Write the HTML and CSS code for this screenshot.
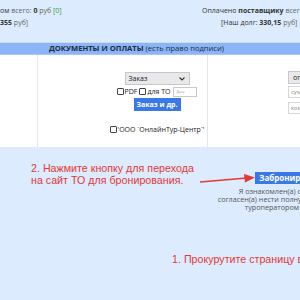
FILE: index.html
```html
<!DOCTYPE html>
<html lang="ru">
<head>
<meta charset="utf-8">
<link rel="stylesheet" href="styles.css">
</head>
<body>
<div class="page">
  <div class="summary">
    <div class="sum-left">
      <div class="line">ом <span class="muted">всего:</span> <b>0</b> <span class="muted">руб</span> <span class="green">[0]</span></div>
      <div class="line"><b>355</b> <span class="muted">руб]</span></div>
    </div>
    <div class="sum-right">
      <div class="line">Оплачено <b>поставщику</b> <span class="muted">всего: 0 руб</span></div>
      <div class="line line2">[Наш долг: <b>330,15</b> <span class="muted">руб]</span></div>
    </div>
  </div>
  <div class="header"><b>ДОКУМЕНТЫ И ОПЛАТЫ</b> (есть право подписи)</div>
  <div class="panel">
    <div class="cell cell-a"></div>
    <div class="cell cell-b">
      <div class="stack">
        <div class="select sel-main"><span>Заказ</span><svg width="6" height="4" viewBox="0 0 6 4"><path d="M0.5 0.5 L3 3 L5.5 0.5" fill="none" stroke="#333" stroke-width="1.1"/></svg></div>
        <div class="checks"><span class="box"></span>PDF <span class="box box2"></span>для ТО <span class="date">Дата</span></div>
        <div class="btn">Заказ и др.</div>
        <div class="firm"><span class="box"></span>'ООО `ОнлайнТур-Центр`'</div>
      </div>
    </div>
    <div class="cell cell-c">
      <div class="select sel-op"><span>оплата</span></div>
      <div class="inp">сумма</div>
      <div class="inp">комментарий</div>
    </div>
  </div>
  <div class="lower">
    <div class="hint">2. Нажмите кнопку для перехода<br>на сайт ТО для бронирования.</div>
    <div class="book">
      <div class="book-btn">Забронировать тур</div>
      <div class="terms">Я ознакомлен(а) с условиями бронирования и<br>согласен(а) нести полную материальную ответственность<br>туроператором в случае аннуляции заказа</div>
    </div>
    <svg class="arrow" width="60" height="12" viewBox="0 0 60 12"><line x1="1" y1="9" x2="48" y2="5" stroke="#e53935" stroke-width="1.3"/><path d="M45 1 L56 4.6 L46 9.5 Z" fill="#e53935"/></svg>
  </div>
  <div class="scroll-hint">1. Прокурутите страницу вниз</div>
</div>
</body>
</html>
```
FILE: styles.css
```css
html, body { margin: 0; padding: 0; }
body {
  width: 300px;
  height: 300px;
  overflow: hidden;
  background: #dcebfd;
  font-family: "Open Sans", "Liberation Sans", sans-serif;
  color: #222;
}
.page { width: 300px; position: relative; }
.summary {
  display: grid;
  grid-template-columns: 202px 200px;
  height: 43px;
  padding-top: 5px;
  box-sizing: border-box;
  font-size: 7px;
  border-bottom: 1px solid #cfdcec;
}
.line { line-height: 12px; white-space: nowrap; color: #333; }
.muted { color: #666; }
.green { color: #3a9a3a; }
.line2 { padding-left: 19px; }
.header {
  background: #8cb5f7;
  height: 11px;
  line-height: 11px;
  font-size: 7.6px;
  padding-left: 49px;
  white-space: nowrap;
  color: #1d2b40;
  border-bottom: 1px solid #a9c7f5;
}
.panel {
  display: grid;
  grid-template-columns: 38px 170px 1fr;
  background: #fff;
  height: 92px;
}
.cell { border-right: 1px solid #e3e6ea; }
.cell-c { border-right: none; padding: 16px 0 0 80px; }
.cell-b { padding: 17px 0 0 69px; }
.stack { width: 100px; display: flex; flex-direction: column; align-items: center; }
.select {
  box-sizing: border-box;
  height: 13px;
  background: #e9e9ec;
  border: 1px solid #c8c8cc;
  font-size: 7px;
  display: flex;
  align-items: center;
  justify-content: space-between;
  padding: 0 4px 0 3px;
  color: #222;
}
.sel-main { width: 65px; }
.sel-op { width: 40px; padding-left: 4px; }
.checks {
  margin-top: 1px;
  height: 11px;
  font-size: 7px;
  display: flex;
  align-items: center;
  white-space: nowrap;
  color: #222;
}
.box {
  display: inline-block;
  width: 5px;
  height: 5px;
  border: 1px solid #444;
  border-radius: 1px;
  margin-right: 1px;
}
.box2 { margin-left: 2px; }
.date {
  display: inline-block;
  margin-left: 3px;
  width: 24px;
  height: 10px;
  box-sizing: border-box;
  border: 1px solid #c9c9c9;
  font-size: 3.5px;
  line-height: 8px;
  padding-left: 2px;
  color: #999;
}
.btn {
  margin-top: 1px;
  background: #3b78e7;
  color: #fff;
  font-weight: bold;
  font-size: 7px;
  height: 13px;
  line-height: 13px;
  width: 47px;
  text-align: center;
  white-space: nowrap;
}
.firm {
  margin-top: 14px;
  font-size: 7px;
  white-space: nowrap;
  display: flex;
  align-items: center;
  color: #222;
}
.inp {
  box-sizing: border-box;
  margin-top: 2px;
  width: 40px;
  height: 12px;
  border: 1px solid #d6d6d6;
  background: #fff;
  font-size: 6px;
  line-height: 10px;
  padding-left: 2px;
  color: #888;
  white-space: nowrap;
  overflow: hidden;
}
.inp + .inp { margin-top: 4px; }
.lower {
  position: relative;
  display: grid;
  grid-template-columns: 230px 180px;
  padding-top: 15px;
  height: 100px;
  box-sizing: border-box;
}
.hint {
  padding-left: 31px;
  font-family: "Liberation Sans", Arial, sans-serif;
  font-size: 10.7px;
  line-height: 12px;
  color: #e53935;
  white-space: nowrap;
}
.book { display: flex; flex-direction: column; align-items: center; padding-top: 10px; }
.book-btn {
  background: #3b78e7;
  color: #fff;
  font-weight: bold;
  font-size: 8px;
  height: 12px;
  line-height: 12px;
  width: 130px;
  text-align: center;
  white-space: nowrap;
  text-indent: -40px;
}
.terms {
  margin-top: 3px;
  font-size: 7.2px;
  line-height: 8px;
  color: #555;
  text-align: center;
  white-space: nowrap;
}
.arrow { position: absolute; left: 199px; top: 26px; }
.scroll-hint {
  padding-left: 172px;
  margin-top: 6px;
  font-family: "Liberation Sans", Arial, sans-serif;
  font-size: 10.7px;
  color: #e53935;
  white-space: nowrap;
}
```
